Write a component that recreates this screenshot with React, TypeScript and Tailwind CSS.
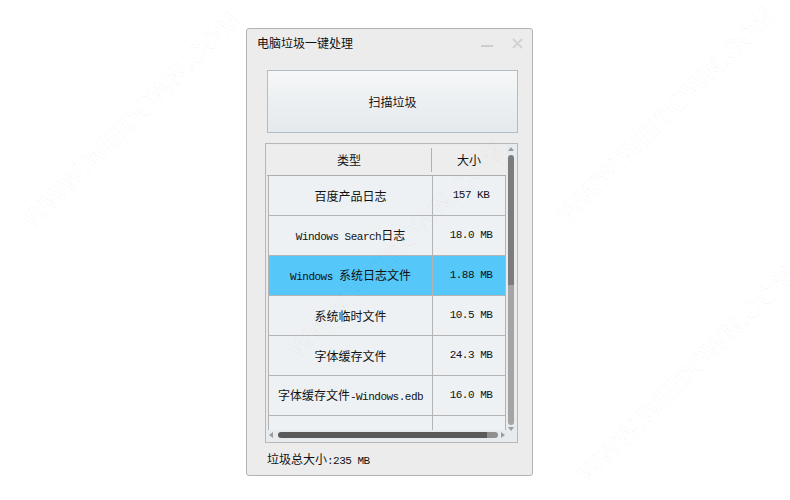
import React from "react";

const M = ({ children }: { children: React.ReactNode }) => (
  <span className="font-['Liberation_Mono',monospace] text-[11px] tracking-[-0.5px] whitespace-pre">{children}</span>
);

type Row = { name: React.ReactNode; size: string; sel?: boolean };

const rows: Row[] = [
  { name: "百度产品日志", size: "157 KB" },
  { name: <><M>Windows Search</M>日志</>, size: "18.0 MB" },
  { name: <><M>Windows </M>系统日志文件</>, size: "1.88 MB", sel: true },
  { name: "系统临时文件", size: "10.5 MB" },
  { name: "字体缓存文件", size: "24.3 MB" },
  { name: <>字体缓存文件<M>-Windows.edb</M></>, size: "16.0 MB" },
  { name: "缩略图缓存文件", size: "8.2 MB" },
];

const Watermark = ({ left, top }: { left: number; top: number }) => (
  <div
    className="absolute pointer-events-none whitespace-nowrap font-['Liberation_Sans',sans-serif] text-[26px] font-bold tracking-[1px] text-white/0 [-webkit-text-stroke:1px_rgba(0,0,0,0.035)] -rotate-45 origin-center"
    style={{ left, top }}
  >
    WWW.WEIDOWN.COM
  </div>
);

export default function App() {
  return (
    <div className="relative w-[790px] h-[500px] bg-white overflow-hidden font-['Noto_Sans_CJK_SC',sans-serif] text-[#111]">
      <div className="pl-[246px] pt-[28px]">
        <div className="w-[287px] h-[448px] border border-[#b3b3b3] rounded-[3px] bg-[#ececec] flex flex-col">
          {/* title bar */}
          <div className="h-[28px] flex items-center pl-[10px] pr-[9px]">
            <span className="text-[12px] leading-none">电脑垃圾一键处理</span>
            <div className="ml-auto flex items-center gap-[19px]">
              <div className="w-[12px] h-[2px] bg-[#cdcdcd] mt-[5px]" />
              <svg width="11" height="11" viewBox="0 0 11 11">
                <path d="M1 1 L10 10 M10 1 L1 10" stroke="#d2d2d2" strokeWidth="2" />
              </svg>
            </div>
          </div>

          {/* scan button */}
          <div className="mt-[13px] ml-[20px] w-[251px] h-[63px] border border-[#b0bdc7] bg-gradient-to-b from-[#f5f7f8] to-[#e5e9ec] flex items-center justify-center text-[12px]">
            扫描垃圾
          </div>

          {/* table */}
          <div className="mt-[10px] ml-[18px] w-[253px] h-[300px] border border-[#b8b8b8] bg-[#e8ebed] flex pl-[1px] pt-[1px]">
            <div className="w-[239px] flex flex-col">
              <div className="h-[31px] border-b border-[#adadad] bg-[#ededed] flex items-center text-[12px]">
                <div className="w-[165px] h-[24px] border-r border-[#b0b0b0] flex items-center justify-center">类型</div>
                <div className="flex-1 flex items-center justify-center">大小</div>
              </div>
              <div className="h-[254px] overflow-hidden">
                {rows.map((r, i) => (
                  <div
                    key={i}
                    className={`ml-[1px] h-[40px] flex border-l border-r border-b border-[#b4b4b4] text-[12px] ${r.sel ? "bg-[#55c7f8]" : "bg-[#eef1f3]"}`}
                  >
                    <div className="w-[164px] border-r border-[#b4b4b4] flex items-center justify-center whitespace-nowrap">
                      <span>{r.name}</span>
                    </div>
                    <div className="flex-1 flex items-center justify-center pl-[4px]">
                      <M>{r.size}</M>
                    </div>
                  </div>
                ))}
              </div>
              {/* horizontal scrollbar */}
              <div className="h-[9px] flex items-center pl-[2px]">
                <svg width="5" height="6" viewBox="0 0 5 6"><path d="M4 0 L0 3 L4 6 Z" fill="#9c9c9c" /></svg>
                <div className="ml-[4px] w-[209px] h-[6px] rounded-l-full bg-[#5a5a5a]" />
                <div className="w-[11px] h-[6px] rounded-r-full bg-[#8f8f8f]" />
                <svg className="ml-[2px]" width="5" height="6" viewBox="0 0 5 6"><path d="M1 0 L5 3 L1 6 Z" fill="#9c9c9c" /></svg>
              </div>
            </div>
            {/* vertical scrollbar */}
            <div className="w-[10px] h-[287px] flex flex-col items-center pt-[2px]">
              <svg width="6" height="5" viewBox="0 0 6 5"><path d="M0 4 L3 0 L6 4 Z" fill="#9c9c9c" /></svg>
              <div className="mt-[3px] w-[6px] h-[130px] rounded-t-full bg-[#7c7c7c]" />
              <div className="w-[6px] h-[140px] rounded-b-full bg-[#a4a4a4]" />
              <svg className="mt-[1px]" width="6" height="5" viewBox="0 0 6 5"><path d="M0 1 L3 5 L6 1 Z" fill="#9c9c9c" /></svg>
            </div>
          </div>

          {/* footer */}
          <div className="mt-[8px] ml-[20px] text-[12px] leading-[16px]">
            垃圾总大小<M>:235 MB</M>
          </div>
        </div>
      </div>

      <Watermark left={-15} top={100} />
      <Watermark left={520} top={95} />
      <Watermark left={540} top={355} />
      <Watermark left={250} top={230} />
    </div>
  );
}
